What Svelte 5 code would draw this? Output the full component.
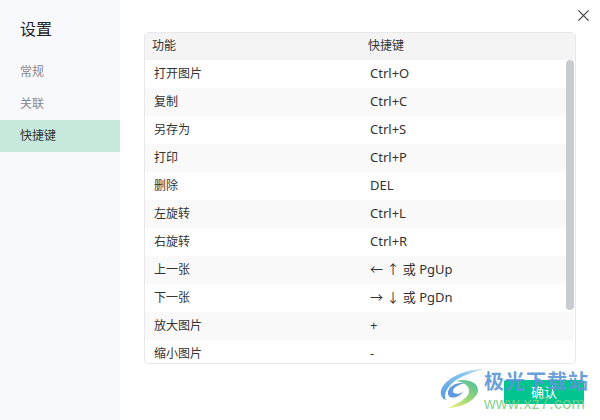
<script>
  const rows = [
    ['打开图片', 'Ctrl+O'],
    ['复制', 'Ctrl+C'],
    ['另存为', 'Ctrl+S'],
    ['打印', 'Ctrl+P'],
    ['删除', 'DEL'],
    ['左旋转', 'Ctrl+L'],
    ['右旋转', 'Ctrl+R'],
    ['上一张', '← ↑ 或 PgUp'],
    ['下一张', '→ ↓ 或 PgDn'],
    ['放大图片', '+'],
    ['缩小图片', '-']
  ];
  const nav = ['常规', '关联', '快捷键'];
  let current = 2;
</script>

<div class="dialog">
  <aside class="side">
    <h1>设置</h1>
    {#each nav as item, i}
      <div class="nav" class:active={i === current}>{item}</div>
    {/each}
  </aside>

  <main class="content">
    <div class="table">
      <div class="row head">
        <span class="name">功能</span>
        <span class="key">快捷键</span>
      </div>
      <div class="body">
        {#each rows as row}
          <div class="row">
            <span class="name">{row[0]}</span>
            <span class="key">{row[1]}</span>
          </div>
        {/each}
        <div class="thumb"></div>
      </div>
    </div>
    <div class="foot">
      <button class="ok">确认</button>
    </div>
  </main>

  <svg class="close" viewBox="0 0 10 10" width="11" height="11">
    <path d="M0.3 0.3 9.7 9.7M9.7 0.3 0.3 9.7" stroke="#333" stroke-width="0.95" fill="none" />
  </svg>

  <div class="mark">
    <svg class="swirl" viewBox="0 0 60 50" width="60" height="50">
      <defs>
        <linearGradient id="sky" x1="1" y1="0" x2="0" y2="1">
          <stop offset="0" stop-color="#d5dfe6" />
          <stop offset="0.35" stop-color="#74c0ee" />
          <stop offset="1" stop-color="#4f8fdc" />
        </linearGradient>
        <linearGradient id="leaf" x1="0.8" y1="0" x2="0.1" y2="1">
          <stop offset="0" stop-color="#45b98c" />
          <stop offset="0.55" stop-color="#93d566" />
          <stop offset="1" stop-color="#f0ea72" />
        </linearGradient>
      </defs>
      <path d="M48 3C30 3 8 12 5 25C4 30 7 33 10 34C7 28 12 20 20 14C28 9 38 6 48 3Z" fill="url(#sky)" />
      <path d="M12 28C11 21 20 16 30 17C24 18 17 21 17 25C17 28 22 29 27 26C23 32 13 34 12 28Z" fill="#4f8fdc" />
      <path d="M20 15C30 12 42 16 42 24C42 33 26 42 12 42C20 38 32 33 33 26C34 20 28 16 20 15Z" fill="url(#leaf)" />
    </svg>
    <div class="brand">极光下载站</div>
    <div class="url">www.xz7.com</div>
  </div>
</div>

<style>
  :global(body) {
    margin: 0;
    background: #fff;
  }
  .dialog {
    position: relative;
    width: 600px;
    height: 420px;
    display: flex;
    overflow: hidden;
    font-family: "Noto Sans CJK SC", "Noto Sans", sans-serif;
    font-size: 12px;
    color: #333;
    background: #fff;
  }
  .side {
    width: 120px;
    flex: none;
    background: #f8f9fd;
  }
  h1 {
    margin: 0;
    padding: 17px 0 0 20px;
    height: 39px;
    font-size: 16px;
    line-height: 22px;
    font-weight: 400;
    color: #222;
  }
  .nav {
    height: 32px;
    line-height: 30px;
    padding-left: 20px;
    color: #888;
  }
  .nav.active {
    background: #c6e9dc;
    color: #333;
  }
  .content {
    flex: 1;
    padding: 32px 24px 0;
    display: flex;
    flex-direction: column;
  }
  .table {
    height: 330px;
    border: 1px solid #e8e8e8;
    border-radius: 4px;
    overflow: hidden;
    flex: none;
  }
  .body {
    position: relative;
    height: 303px;
    overflow: hidden;
  }
  .row {
    display: flex;
    height: 28px;
    line-height: 26px;
    background: #fff;
  }
  .body .row {
    margin-right: 1px;
  }
  .body .row:nth-child(even) {
    background: #f9f9f9;
  }
  .head {
    height: 27px;
    line-height: 24px;
    background: #f4f4f4;
  }
  .name {
    width: 223px;
    padding-left: 9px;
    box-sizing: border-box;
  }
  .head .name {
    padding-left: 7px;
  }
  .key {
    flex: 1;
    padding-left: 2px;
    white-space: pre;
    font-family: "Noto Sans", "Noto Sans CJK SC", sans-serif;
    font-size: 13px;
  }
  .head .key {
    padding-left: 0;
    font-family: inherit;
    font-size: 12px;
  }
  .thumb {
    position: absolute;
    top: 0;
    right: 1px;
    width: 8px;
    height: 250px;
    border-radius: 4px;
    background: #c8cbd0;
  }
  .foot {
    display: flex;
    justify-content: flex-end;
    margin-top: 16px;
    margin-right: -8px;
  }
  .ok {
    width: 80px;
    height: 24px;
    border: 0;
    border-radius: 2px;
    padding: 0 0 2px;
    background: #00c58e;
    color: #fff;
    font: inherit;
    font-size: 13px;
  }
  .close {
    position: absolute;
    top: 10px;
    right: 11px;
  }
  .mark {
    position: absolute;
    left: 436px;
    top: 366px;
    width: 164px;
    height: 54px;
    opacity: 0.9;
    pointer-events: none;
  }
  .swirl {
    position: absolute;
    left: 0;
    top: 0;
  }
  .brand {
    position: absolute;
    left: 48px;
    top: 1px;
    font-size: 20px;
    line-height: 28px;
    font-weight: 700;
    letter-spacing: 1px;
    color: #5b97d8;
    white-space: nowrap;
  }
  .url {
    position: absolute;
    left: 48px;
    top: 28px;
    font-family: "Liberation Sans", sans-serif;
    font-size: 16px;
    line-height: 20px;
    letter-spacing: 0.3px;
    color: #7dcf8a;
    white-space: nowrap;
  }
</style>
